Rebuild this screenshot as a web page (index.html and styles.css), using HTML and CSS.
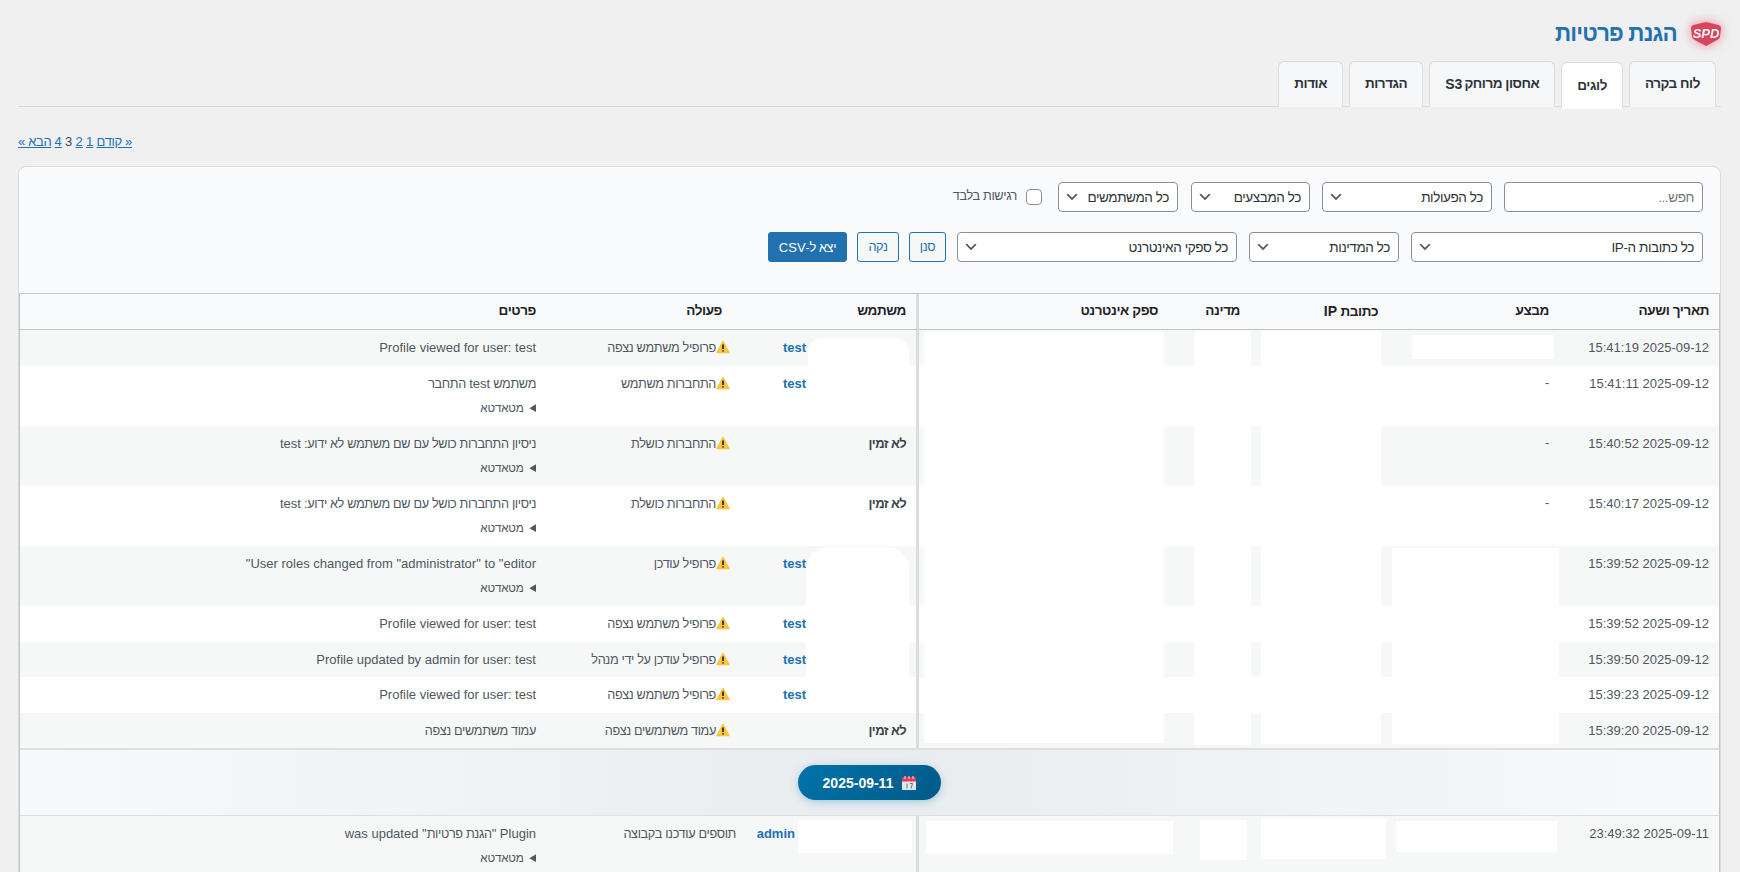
FILE: index.html
```html
<!DOCTYPE html>
<html lang="he" dir="rtl">
<head>
<meta charset="utf-8">
<title>הגנת פרטיות</title>
<link rel="stylesheet" href="styles.css">
</head>
<body>
<div class="wrap">
  <header class="title-row">
    <svg class="logo" viewBox="0 0 30 24" width="30" height="24" aria-hidden="true">
      <path d="M15 0 L27.500 3 Q30 3.600 30 6 L29 14.500 Q28.800 16.500 27 17.500 L15 24 L3 17.500 Q1.200 16.500 1 14.500 L0 6 Q0 3.600 2.500 3 Z" fill="#d9455f"/>
      <text x="15" y="15.500" text-anchor="middle" class="logo-text" direction="ltr">SPD</text>
    </svg>
    <h1 class="title">הגנת פרטיות</h1>
  </header>

  <nav class="tabs">
    <a class="tab">לוח בקרה</a>
    <a class="tab tab-active">לוגים</a>
    <a class="tab">אחסון מרוחק <span class="lat">S3</span></a>
    <a class="tab">הגדרות</a>
    <a class="tab">אודות</a>
  </nav>

  <div class="pagination">
    <a href="#">« קודם</a>
    <a class="lat" href="#">1</a>
    <a class="lat" href="#">2</a>
    <span class="lat">3</span>
    <a class="lat" href="#">4</a>
    <a href="#">הבא »</a>
  </div>

  <section class="card">
    <form class="filters">
      <div class="filter-row">
        <input class="field f-search" type="text" placeholder="חפש...">
        <label class="sel f-action"><select><option>כל הפעולות</option></select><svg viewBox="0 0 20 20"><path d="M5 6l5 5 5-5 2 1-7 7-7-7 2-1z"/></svg></label>
        <label class="sel f-performer"><select><option>כל המבצעים</option></select><svg viewBox="0 0 20 20"><path d="M5 6l5 5 5-5 2 1-7 7-7-7 2-1z"/></svg></label>
        <label class="sel f-user"><select><option>כל המשתמשים</option></select><svg viewBox="0 0 20 20"><path d="M5 6l5 5 5-5 2 1-7 7-7-7 2-1z"/></svg></label>
        <label class="check"><input type="checkbox"><span>רגישות בלבד</span></label>
      </div>
      <div class="filter-row">
        <label class="sel f-ip"><select><option>כל כתובות ה-IP</option></select><svg viewBox="0 0 20 20"><path d="M5 6l5 5 5-5 2 1-7 7-7-7 2-1z"/></svg></label>
        <label class="sel f-country"><select><option>כל המדינות</option></select><svg viewBox="0 0 20 20"><path d="M5 6l5 5 5-5 2 1-7 7-7-7 2-1z"/></svg></label>
        <label class="sel f-isp"><select><option>כל ספקי האינטרנט</option></select><svg viewBox="0 0 20 20"><path d="M5 6l5 5 5-5 2 1-7 7-7-7 2-1z"/></svg></label>
        <button class="btn b-scan" type="button">סנן</button>
        <button class="btn b-clear" type="button">נקה</button>
        <button class="btn b-primary" type="button">יצא ל-<span class="lat">CSV</span></button>
      </div>
    </form>

    <div class="table-wrap">
      <table class="logs">
        <colgroup>
          <col class="c-date"><col class="c-exec"><col class="c-ip"><col class="c-country"><col class="c-isp"><col class="c-user"><col class="c-action"><col class="c-details">
        </colgroup>
        <thead>
          <tr>
            <th>תאריך ושעה</th><th>מבצע</th><th>כתובת <span class="lat">IP</span></th><th>מדינה</th><th>ספק אינטרנט</th><th class="sep">משתמש</th><th class="th-action">פעולה</th><th>פרטים</th>
          </tr>
        </thead>
        <tbody>
          <tr class="first">
            <td class="lat">2025-09-12 15:41:19</td><td></td><td></td><td></td><td></td>
            <td class="sep"><a class="ulink lat" href="#">test</a></td>
            <td class="action"><svg class="warn" viewBox="0 0 14 14"><path d="M7 1.500 L13 12.500 H1 Z" fill="#fdc53e" stroke="#fdc53e" stroke-width="1.500" stroke-linejoin="round"/><path d="M7 4.500 V9 M7 10.300 V11.600" stroke="#222" stroke-width="1.700"/></svg>פרופיל משתמש נצפה</td>
            <td class="lat">Profile viewed for user: test</td>
          </tr>
          <tr class="alt tall">
            <td class="lat">2025-09-12 15:41:11</td><td>-</td><td></td><td></td><td></td>
            <td class="sep"><a class="ulink lat" href="#">test</a></td>
            <td class="action"><svg class="warn" viewBox="0 0 14 14"><path d="M7 1.500 L13 12.500 H1 Z" fill="#fdc53e" stroke="#fdc53e" stroke-width="1.500" stroke-linejoin="round"/><path d="M7 4.500 V9 M7 10.300 V11.600" stroke="#222" stroke-width="1.700"/></svg>התחברות משתמש</td>
            <td>משתמש <span class="lat">test</span> התחבר<details class="meta"><summary>מטאדטא</summary></details></td>
          </tr>
          <tr class="tall">
            <td class="lat">2025-09-12 15:40:52</td><td>-</td><td></td><td></td><td></td>
            <td class="sep"><strong class="na">לא זמין</strong></td>
            <td class="action"><svg class="warn" viewBox="0 0 14 14"><path d="M7 1.500 L13 12.500 H1 Z" fill="#fdc53e" stroke="#fdc53e" stroke-width="1.500" stroke-linejoin="round"/><path d="M7 4.500 V9 M7 10.300 V11.600" stroke="#222" stroke-width="1.700"/></svg>התחברות כושלת</td>
            <td>ניסיון התחברות כושל עם שם משתמש לא ידוע: <span class="lat">test</span><details class="meta"><summary>מטאדטא</summary></details></td>
          </tr>
          <tr class="alt tall">
            <td class="lat">2025-09-12 15:40:17</td><td>-</td><td></td><td></td><td></td>
            <td class="sep"><strong class="na">לא זמין</strong></td>
            <td class="action"><svg class="warn" viewBox="0 0 14 14"><path d="M7 1.500 L13 12.500 H1 Z" fill="#fdc53e" stroke="#fdc53e" stroke-width="1.500" stroke-linejoin="round"/><path d="M7 4.500 V9 M7 10.300 V11.600" stroke="#222" stroke-width="1.700"/></svg>התחברות כושלת</td>
            <td>ניסיון התחברות כושל עם שם משתמש לא ידוע: <span class="lat">test</span><details class="meta"><summary>מטאדטא</summary></details></td>
          </tr>
          <tr class="tall">
            <td class="lat">2025-09-12 15:39:52</td><td></td><td></td><td></td><td></td>
            <td class="sep"><a class="ulink lat" href="#">test</a></td>
            <td class="action"><svg class="warn" viewBox="0 0 14 14"><path d="M7 1.500 L13 12.500 H1 Z" fill="#fdc53e" stroke="#fdc53e" stroke-width="1.500" stroke-linejoin="round"/><path d="M7 4.500 V9 M7 10.300 V11.600" stroke="#222" stroke-width="1.700"/></svg>פרופיל עודכן</td>
            <td><span class="lat">User roles changed from "administrator" to "editor"</span><details class="meta"><summary>מטאדטא</summary></details></td>
          </tr>
          <tr class="alt">
            <td class="lat">2025-09-12 15:39:52</td><td></td><td></td><td></td><td></td>
            <td class="sep"><a class="ulink lat" href="#">test</a></td>
            <td class="action"><svg class="warn" viewBox="0 0 14 14"><path d="M7 1.500 L13 12.500 H1 Z" fill="#fdc53e" stroke="#fdc53e" stroke-width="1.500" stroke-linejoin="round"/><path d="M7 4.500 V9 M7 10.300 V11.600" stroke="#222" stroke-width="1.700"/></svg>פרופיל משתמש נצפה</td>
            <td class="lat">Profile viewed for user: test</td>
          </tr>
          <tr>
            <td class="lat">2025-09-12 15:39:50</td><td></td><td></td><td></td><td></td>
            <td class="sep"><a class="ulink lat" href="#">test</a></td>
            <td class="action"><svg class="warn" viewBox="0 0 14 14"><path d="M7 1.500 L13 12.500 H1 Z" fill="#fdc53e" stroke="#fdc53e" stroke-width="1.500" stroke-linejoin="round"/><path d="M7 4.500 V9 M7 10.300 V11.600" stroke="#222" stroke-width="1.700"/></svg>פרופיל עודכן על ידי מנהל</td>
            <td class="lat">Profile updated by admin for user: test</td>
          </tr>
          <tr class="alt">
            <td class="lat">2025-09-12 15:39:23</td><td></td><td></td><td></td><td></td>
            <td class="sep"><a class="ulink lat" href="#">test</a></td>
            <td class="action"><svg class="warn" viewBox="0 0 14 14"><path d="M7 1.500 L13 12.500 H1 Z" fill="#fdc53e" stroke="#fdc53e" stroke-width="1.500" stroke-linejoin="round"/><path d="M7 4.500 V9 M7 10.300 V11.600" stroke="#222" stroke-width="1.700"/></svg>פרופיל משתמש נצפה</td>
            <td class="lat">Profile viewed for user: test</td>
          </tr>
          <tr>
            <td class="lat">2025-09-12 15:39:20</td><td></td><td></td><td></td><td></td>
            <td class="sep"><strong class="na">לא זמין</strong></td>
            <td class="action"><svg class="warn" viewBox="0 0 14 14"><path d="M7 1.500 L13 12.500 H1 Z" fill="#fdc53e" stroke="#fdc53e" stroke-width="1.500" stroke-linejoin="round"/><path d="M7 4.500 V9 M7 10.300 V11.600" stroke="#222" stroke-width="1.700"/></svg>עמוד משתמשים נצפה</td>
            <td class="he-only">עמוד משתמשים נצפה</td>
          </tr>
          <tr class="day-row">
            <td colspan="8">
              <span class="day-pill">
                <svg class="cal" viewBox="0 0 14 14" width="14" height="14"><rect x="0" y="1" width="14" height="13" fill="#e4e7ea"/><rect x="0" y="1" width="14" height="4.500" fill="#dd3f57"/><path d="M3 0v3M7 0v3M11 0v3" stroke="#f3c6cd" stroke-width="1.200"/><path d="M5 7.500v5M8 7.500h2.500L9 12.500" stroke="#6b7280" stroke-width="1" fill="none"/></svg>
                <span class="lat">2025-09-11</span>
              </span>
            </td>
          </tr>
          <tr class="tall">
            <td class="lat">2025-09-11 23:49:32</td><td></td><td></td><td></td><td></td>
            <td class="sep"><a class="ulink ulink-admin lat" href="#">admin</a></td>
            <td class="action action-plain">תוספים עודכנו בקבוצה</td>
            <td><span class="lat">Plugin "</span>הגנת פרטיות<span class="lat">" was updated</span><details class="meta"><summary>מטאדטא</summary></details></td>
          </tr>
        </tbody>
      </table>
      <div class="mask m-user1"></div>
      <div class="mask m-user2"></div>
      <div class="mask m-isp"></div>
      <div class="mask m-country"></div>
      <div class="mask m-ip"></div>
      <div class="mask m-exec1"></div>
      <div class="mask m-exec2"></div>
      <div class="mask m-user3"></div>
      <div class="mask m-isp3"></div>
      <div class="mask m-country3"></div>
      <div class="mask m-ip3"></div>
      <div class="mask m-exec3"></div>
    </div>
  </section>
</div>
</body>
</html>
```

FILE: styles.css
```css
* { box-sizing: border-box; }
html, body { margin: 0; height: 100%; overflow: hidden; }
body {
  background: #f0f0f1;
  color: #3c434a;
  font-family: "Liberation Sans", Arial, sans-serif;
  font-size: 12.7px;
  line-height: 1.4;
  letter-spacing: -.35px;
}
.lat { font-size: 13px; letter-spacing: 0; }
th .lat, .tab .lat, .day-pill .lat { font-size: 14px; }
.wrap { padding: 0 19px 0 18px; }

.title-row { display: flex; align-items: center; gap: 14px; height: 61px; padding-top: 6px; }
.logo { flex: none; overflow: visible; filter: drop-shadow(0 0 6px rgba(217, 69, 95, .6)); }
.logo-text { fill: #fff; font: italic 700 13px "Liberation Sans", sans-serif; letter-spacing: 0; }
.title { margin: 0; color: #2271b1; font-size: 22.5px; font-weight: 700; line-height: 1.3; letter-spacing: -.8px; }

.tabs { display: flex; gap: 6px; height: 46px; padding-right: 5px; border-bottom: 1px solid #dcdcde; }
.tab {
  display: flex; align-items: center; gap: 2px; height: 46px;
  padding: 0 15px;
  background: #f6f7f9;
  border: 1px solid #dcdcde; border-bottom: 0;
  border-radius: 6px 6px 0 0;
  color: #2c3338; font-size: 13.5px; font-weight: 700; letter-spacing: -.45px;
}
.tab-active { background: #fff; height: 47px; margin-top: 1px; position: relative; z-index: 1; }

.pagination { height: 59px; padding-top: 25px; font-size: 13px; line-height: 20px; text-align: left; letter-spacing: -.35px; }
.pagination a { color: #2271b1; }

.card {
  background: #f9fafb;
  border: 1px solid #dcdcde;
  border-radius: 8px 8px 0 0;
}
.filters { padding: 15px 17px 31px; display: flex; flex-direction: column; gap: 20px; }
.filter-row { display: flex; align-items: center; gap: 12px; height: 30px; }

.field, .sel select {
  height: 30px; width: 100%;
  background: #fff;
  border: 1px solid #8c8f94; border-radius: 4px;
  color: #2c3338;
  font: 13.5px "Liberation Sans", Arial, sans-serif;
  letter-spacing: -.4px;
  padding: 0 8px;
  appearance: none;
}
.field::placeholder { color: #757575; opacity: 1; }
.sel { position: relative; display: block; flex: none; }
.sel svg { position: absolute; left: 6px; top: 7px; width: 16px; height: 16px; fill: #50575e; pointer-events: none; }
.f-search { flex: none; width: 199px; }
.f-action { width: 170px; }
.f-performer { width: 119px; }
.f-user { width: 120px; margin-right: 1px; }
.f-ip { width: 292px; }
.f-country { width: 150px; }
.f-isp { width: 280px; }

.check { display: flex; align-items: center; gap: 9px; margin-right: 4px; color: #50575e; }
.check input { appearance: none; width: 16px; height: 16px; margin: 0; background: #fff; border: 1px solid #8c8f94; border-radius: 4px; }

.btn { height: 30px; border: 1px solid #2271b1; border-radius: 3px; background: #f6f7f7; color: #2271b1; font: 12.7px "Liberation Sans", Arial, sans-serif; letter-spacing: -.35px; padding: 0; }
.b-scan { width: 37px; margin-right: -1px; }
.b-clear { width: 42px; margin-right: -2px; }
.b-primary { width: 79px; margin-right: -2px; background: #2271b1; color: #fff; }

.table-wrap { position: relative; }
.logs {
  width: 100%;
  table-layout: fixed;
  border-collapse: separate; border-spacing: 0;
  border: 1px solid #c3c4c7; border-bottom: 0;
  background: #fff;
}
.c-date { width: 160px; } .c-exec { width: 171px; } .c-ip { width: 138px; } .c-country { width: 82px; }
.c-isp { width: 249px; } .c-user { width: 183px; } .c-action { width: 190px; } .c-details { width: 526px; }

th {
  height: 36px;
  background: #f9fafb;
  border-bottom: 1px solid #c3c4c7;
  padding: 0 10px;
  color: #1d2327; font-size: 13.5px; font-weight: 700; text-align: right; letter-spacing: -.4px;
}
.th-action { padding-right: 14px; }
td {
  height: 35.5px;
  padding: 8px 10px 0;
  background: #f6f7f7;
  color: #50575e; line-height: 19.5px;
  vertical-align: top; text-align: right;
}
.first td { height: 36px; }
.tall td { height: 60px; }
.alt td { background: #fff; }
.sep { border-right: 3px solid #dcdcde; }

td.action { padding-top: 9px; padding-right: 6px; }
td.action-plain { padding-right: 0; }
td.he-only { padding-top: 9px; }
.warn { width: 14px; height: 14px; vertical-align: -2px; }
.ulink { color: #2271b1; font-weight: 700; text-decoration: none; margin-right: 100px; }
.ulink-admin { margin-right: 111px; }
.na { color: #3c434a; font-size: 13px; font-weight: 700; letter-spacing: -.6px; }

.meta { margin-top: 2px; font-size: 11.7px; line-height: 18px; padding-top: 2px; letter-spacing: -.2px; }
.meta summary { cursor: pointer; }

.day-row td {
  height: 68px; padding: 0;
  background: linear-gradient(90deg, #f8f9fa, #e9ecef 50%, #f8f9fa);
  border-top: 2px solid #dcdfe4; border-bottom: 1px solid #dcdfe4;
  text-align: center; vertical-align: middle;
}
.day-pill {
  display: inline-flex; align-items: center; justify-content: center; gap: 9px;
  width: 143px; height: 35px;
  border-radius: 20px;
  background: linear-gradient(135deg, #0073aa, #005a87);
  box-shadow: 0 2px 8px rgba(0, 115, 170, .3);
  color: #fff; font-size: 14px; font-weight: 700; line-height: 1;
  vertical-align: middle;
}

.mask { position: absolute; background: #fff; }
.m-user1 { left: 789px; top: 45px; width: 101px; height: 32px; border-radius: 14px 14px 0 0; }
.m-user2 { left: 787px; top: 254px; width: 103px; height: 165px; border-radius: 22px 22px 0 0; }
.m-isp { left: 905px; top: 39px; width: 240px; height: 411px; }
.m-country { left: 1175px; top: 38px; width: 57px; height: 414px; }
.m-ip { left: 1242px; top: 38px; width: 120px; height: 413px; }
.m-exec1 { left: 1393px; top: 42px; width: 142px; height: 24px; }
.m-exec2 { left: 1373px; top: 255px; width: 167px; height: 196px; }
.m-user3 { left: 779px; top: 527px; width: 114px; height: 33px; }
.m-isp3 { left: 907px; top: 528px; width: 247px; height: 33px; }
.m-country3 { left: 1181px; top: 527px; width: 47px; height: 40px; }
.m-ip3 { left: 1242px; top: 525px; width: 125px; height: 41px; }
.m-exec3 { left: 1377px; top: 528px; width: 161px; height: 31px; }
```
